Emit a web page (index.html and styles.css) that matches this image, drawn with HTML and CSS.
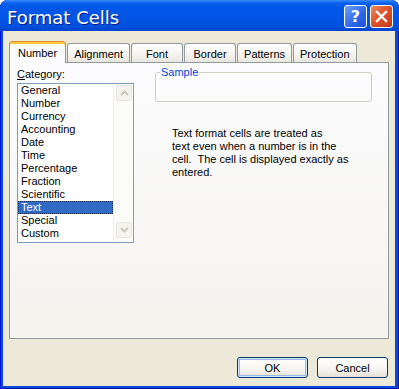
FILE: index.html
```html
<!DOCTYPE html>
<html lang="en">
<head>
  <meta charset="UTF-8" />
  <title>Format Cells</title>
  <meta name="viewport" content="width=device-width, initial-scale=1.0" />
  <link rel="stylesheet" href="styles.css">
</head>
<body>

  <div class="window">
    <div class="titlebar">
      <span class="title">Format Cells</span>
      <div class="title-buttons">
        <div class="title-btn help">?</div>
        <div class="title-btn close">
          <svg width="13" height="13" viewBox="0 0 13 13">
            <path d="M2 2 L11 11 M11 2 L2 11" stroke="#fff" stroke-width="2.4" stroke-linecap="square" fill="none" />
          </svg>
        </div>
      </div>
    </div>

    <div class="client">
      <div class="tabs">
        <div class="tab active">Number</div>
        <div class="tab">Alignment</div>
        <div class="tab">Font</div>
        <div class="tab">Border</div>
        <div class="tab">Patterns</div>
        <div class="tab">Protection</div>
      </div>

      <div class="panel">
        <div class="category">
          <div class="category-label"><u>C</u>ategory:</div>
          <div class="listbox">
            <ul class="items">
              <li>General</li>
              <li>Number</li>
              <li>Currency</li>
              <li>Accounting</li>
              <li>Date</li>
              <li>Time</li>
              <li>Percentage</li>
              <li>Fraction</li>
              <li>Scientific</li>
              <li class="selected">Text</li>
              <li>Special</li>
              <li>Custom</li>
            </ul>
            <div class="scrollbar">
              <div class="scroll-btn">
                <svg width="9" height="6" viewBox="0 0 9 6"><path d="M1 5 L4.5 1.5 L8 5" stroke="#c9c7ba" stroke-width="2" fill="none" /></svg>
              </div>
              <div class="scroll-btn">
                <svg width="9" height="6" viewBox="0 0 9 6"><path d="M1 1 L4.5 4.5 L8 1" stroke="#c9c7ba" stroke-width="2" fill="none" /></svg>
              </div>
            </div>
          </div>
        </div>

        <div class="details">
          <fieldset class="sample">
            <legend>Sample</legend>
          </fieldset>
          <p class="description">
            Text format cells are treated as<br>
            text even when a number is in the<br>
            cell.&nbsp; The cell is displayed exactly as<br>
            entered.
          </p>
        </div>
      </div>

      <div class="actions">
        <button class="btn default">OK</button>
        <button class="btn">Cancel</button>
      </div>
    </div>
  </div>

</body>
</html>
```

FILE: styles.css
```css
* {
  box-sizing: border-box;
}

body {
  margin: 0;
  background: #fff;
  font-family: "Liberation Sans", Arial, sans-serif;
  font-size: 11px;
  color: #000;
}

.window {
  width: 399px;
  height: 389px;
  display: flex;
  flex-direction: column;
  padding-bottom: 3px;
  background: #0846dc;
  border-radius: 8px 8px 0 0;
  box-shadow: inset 1px 0 #0019cf, inset -1px 0 #001ea0, inset 0 -1px #001ea0;
}

.titlebar {
  height: 31px;
  display: flex;
  justify-content: space-between;
  align-items: flex-start;
  padding: 0 6px 0 7px;
  border-radius: 8px 8px 0 0;
  background: linear-gradient(#3d8bf7 0, #0a63f0 3px, #0058e7 6px, #0055e5 50%, #0051de 85%, #0043cc 100%);
}

.title {
  margin-top: 7px;
  font-family: "DejaVu Sans", sans-serif;
  font-size: 18px;
  line-height: 21px;
  color: #fff;
  text-shadow: 1px 1px #0a1883;
}

.title-buttons {
  display: flex;
  gap: 3px;
  margin-top: 5px;
}

.title-btn {
  width: 23px;
  height: 23px;
  border: 1px solid #fff;
  border-radius: 3px;
  display: flex;
  align-items: center;
  justify-content: center;
}

.title-btn.help {
  background: linear-gradient(135deg, #6ea2fb, #2b66e6 60%, #1d55d6);
  color: #fff;
  font-family: "DejaVu Sans", sans-serif;
  font-weight: bold;
  font-size: 16px;
}

.title-btn.close {
  background: linear-gradient(135deg, #ee8a66, #e0532b 45%, #c3371a);
}

.client {
  flex: 1;
  margin: 0 4px 0 3px;
  padding-top: 10px;
  background: #ece9d8;
  display: flex;
  flex-direction: column;
}

.tabs {
  display: flex;
  align-items: flex-end;
  padding-left: 6px;
  position: relative;
  z-index: 1;
}

.tab {
  height: 19px;
  min-width: 52px;
  padding: 4px 6px 0;
  margin-right: 1px;
  line-height: 13px;
  text-align: center;
  border: 1px solid #919b9c;
  border-bottom: none;
  border-radius: 3px 3px 0 0;
  background: linear-gradient(#fff, #f4f3ef 60%, #e8e6df);
}

.tab.active {
  height: 22px;
  margin-bottom: -1px;
  padding: 5px 8px 0;
  border-top-color: #e68b2c;
  background: #fcfcfe;
  box-shadow: inset 0 2px #ffc83c;
}

.panel {
  width: 380px;
  height: 277px;
  margin-left: 6px;
  padding: 5px 0 0 7px;
  display: flex;
  gap: 21px;
  border: 1px solid #919b9c;
  background: linear-gradient(#fcfcfe, #f4f3ee);
}

.category-label {
  line-height: 13px;
}

.listbox {
  width: 117px;
  height: 160px;
  margin-top: 2px;
  display: flex;
  border: 1px solid #7f9db9;
  background: #fff;
}

.items {
  list-style: none;
  margin: 0;
  padding: 0;
  width: 95px;
}

.items li {
  height: 13px;
  line-height: 13px;
  padding-left: 3px;
}

.items li.selected {
  background: #316ac5;
  color: #fff;
  outline: 1px dotted #1d2f5c;
  outline-offset: -1px;
}

.scrollbar {
  flex: 1;
  display: flex;
  flex-direction: column;
  justify-content: space-between;
  padding: 1px 1px 4px 2px;
  background: #fbfbf8;
  border-left: 1px solid #f0efe8;
}

.scroll-btn {
  width: 16px;
  height: 16px;
  display: flex;
  align-items: center;
  justify-content: center;
  border: 1px solid #e8e6dc;
  border-radius: 2px;
  background: #f4f3ee;
}

.details {
  margin-top: -2px;
}

.sample {
  width: 217px;
  height: 36px;
  margin: 0;
  padding: 0;
  border: 1px solid #d0d0bf;
  border-radius: 3px;
}

.sample legend {
  margin-left: 4px;
  padding: 0 1px;
  line-height: 13px;
  color: #0046d5;
}

.description {
  margin: 25px 0 0 17px;
  line-height: 13px;
  white-space: nowrap;
}

.actions {
  display: flex;
  justify-content: flex-end;
  gap: 9px;
  margin-top: 18px;
  padding-right: 7px;
}

.btn {
  width: 71px;
  height: 21px;
  padding: 0;
  font-family: "Liberation Sans", Arial, sans-serif;
  font-size: 11px;
  color: #000;
  border: 1px solid #003c74;
  border-radius: 3px;
  background: linear-gradient(#fff, #f5f4ef 60%, #e3e1d7);
}

.btn.default {
  box-shadow: inset 0 0 0 1px #cee7ff, inset 0 0 0 2px #98b8ea;
}
```
